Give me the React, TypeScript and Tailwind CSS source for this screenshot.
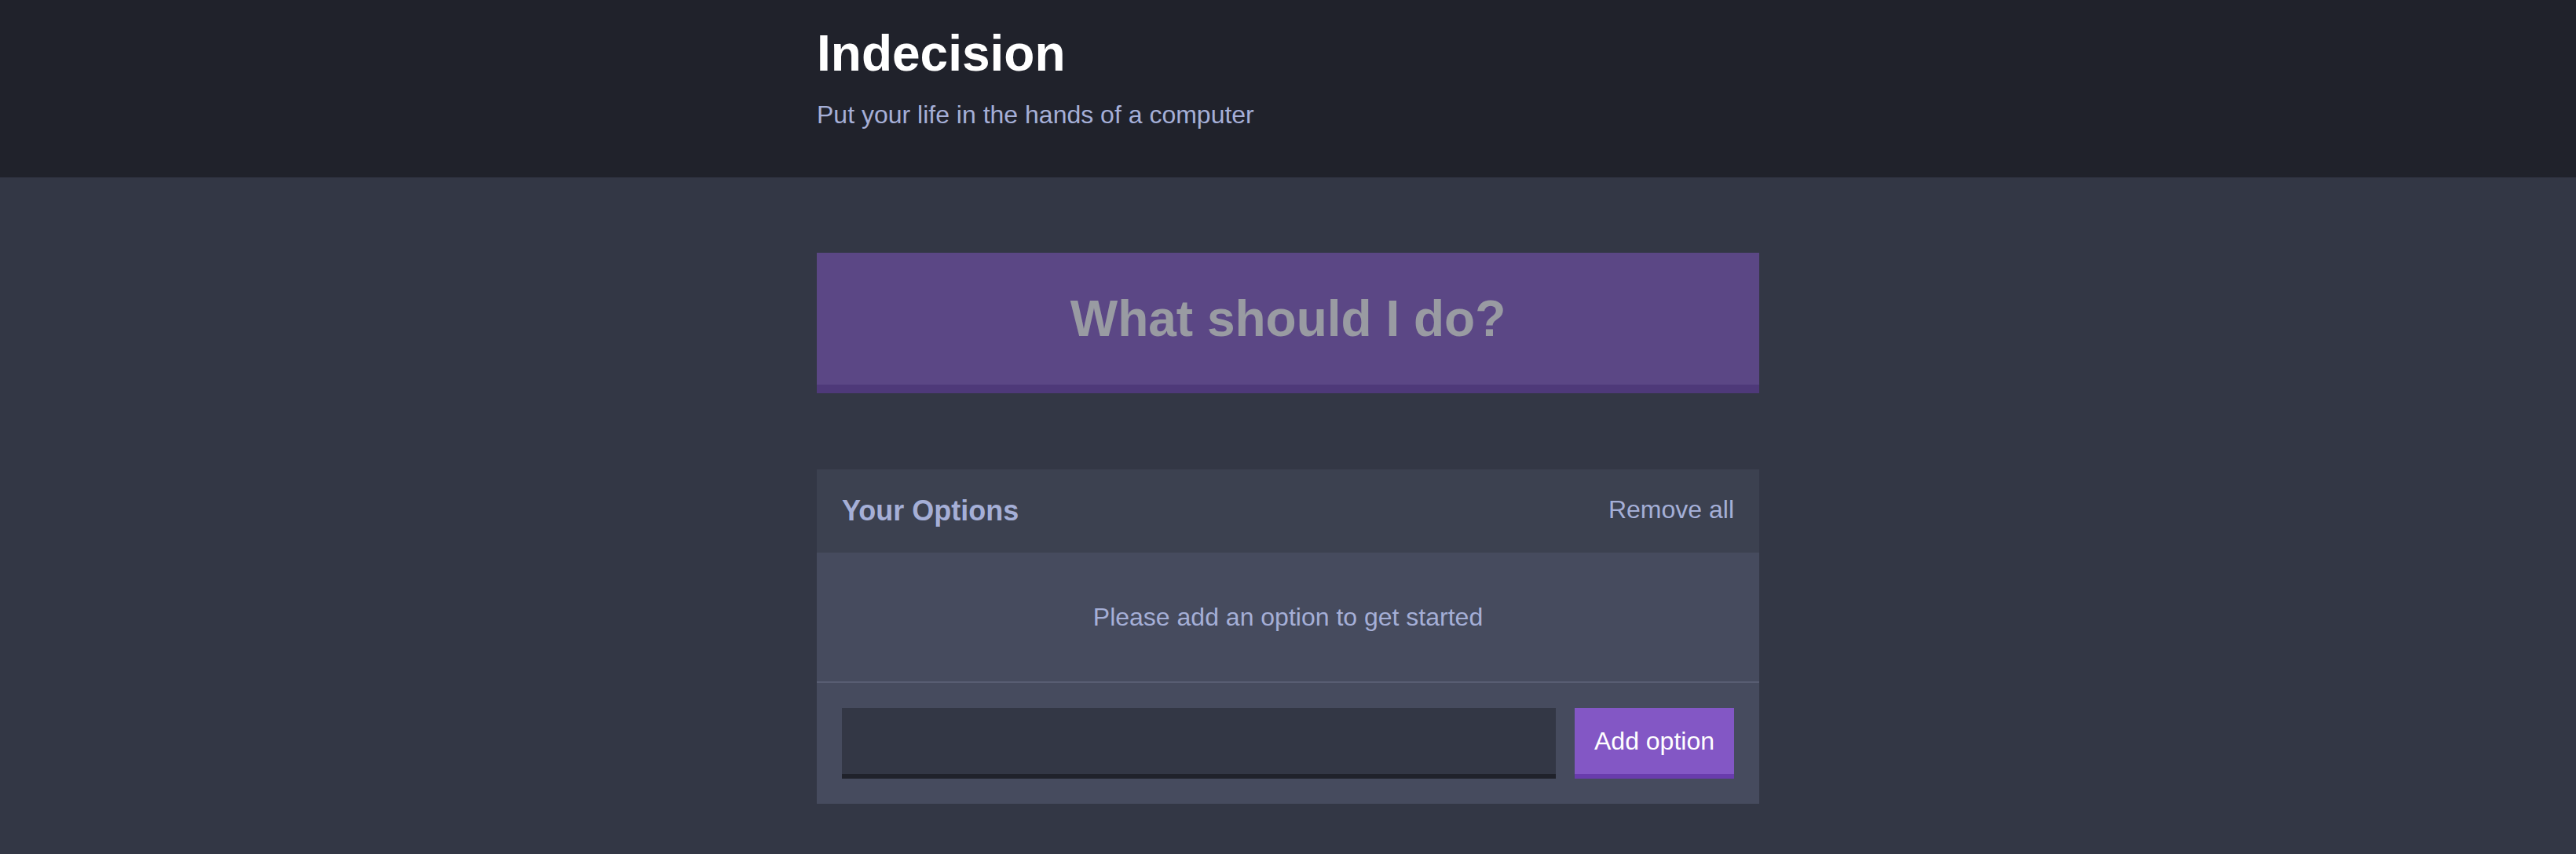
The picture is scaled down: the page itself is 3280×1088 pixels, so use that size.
export default function App() {
    return (
        <div className="min-h-[1088px] bg-[#333745] font-['Liberation_Sans',Arial,sans-serif]">
            <header className="h-[226px] bg-[#20222b]">
                <div className="mx-auto w-[1200px] pt-[36px]">
                    <h1 className="text-[64px] font-bold leading-none text-white">Indecision</h1>
                    <p className="mt-[30px] text-[32px] leading-none text-[#a5afd7]">Put your life in the hands of a computer</p>
                </div>
            </header>
            <main className="mx-auto w-[1200px] pt-[96px]">
                <button
                    disabled
                    className="flex h-[179px] w-full items-center justify-center border-b-[11px] border-[#693cad] bg-[#8357c5] text-[64px] font-bold leading-none text-white opacity-50"
                >
                    What should I do?
                </button>
                <div className="mt-[97px] bg-[#464b5e]">
                    <div className="flex h-[106px] items-center justify-between bg-[#3c4150] px-[32px]">
                        <h3 className="text-[36px] font-bold leading-none text-[#a5afd7]">Your Options</h3>
                        <button className="pb-[4px] text-[32px] leading-none text-[#a5afd7]">Remove all</button>
                    </div>
                    <div className="flex h-[166px] items-center justify-center border-b-2 border-[#585d72]">
                        <p className="text-[32px] leading-none text-[#a5afd7]">Please add an option to get started</p>
                    </div>
                    <form className="flex gap-[24px] p-[32px]">
                        <input
                            type="text"
                            className="h-[90px] flex-1 border-b-[6px] border-[#20222b] bg-[#333745] px-[16px] text-[32px] text-[#a5afd7] outline-none"
                        />
                        <button
                            type="button"
                            className="h-[90px] border-b-[6px] border-[#693cad] bg-[#8357c5] px-[25px] text-[32px] leading-none text-white"
                        >
                            Add option
                        </button>
                    </form>
                </div>
            </main>
        </div>
    )
}
